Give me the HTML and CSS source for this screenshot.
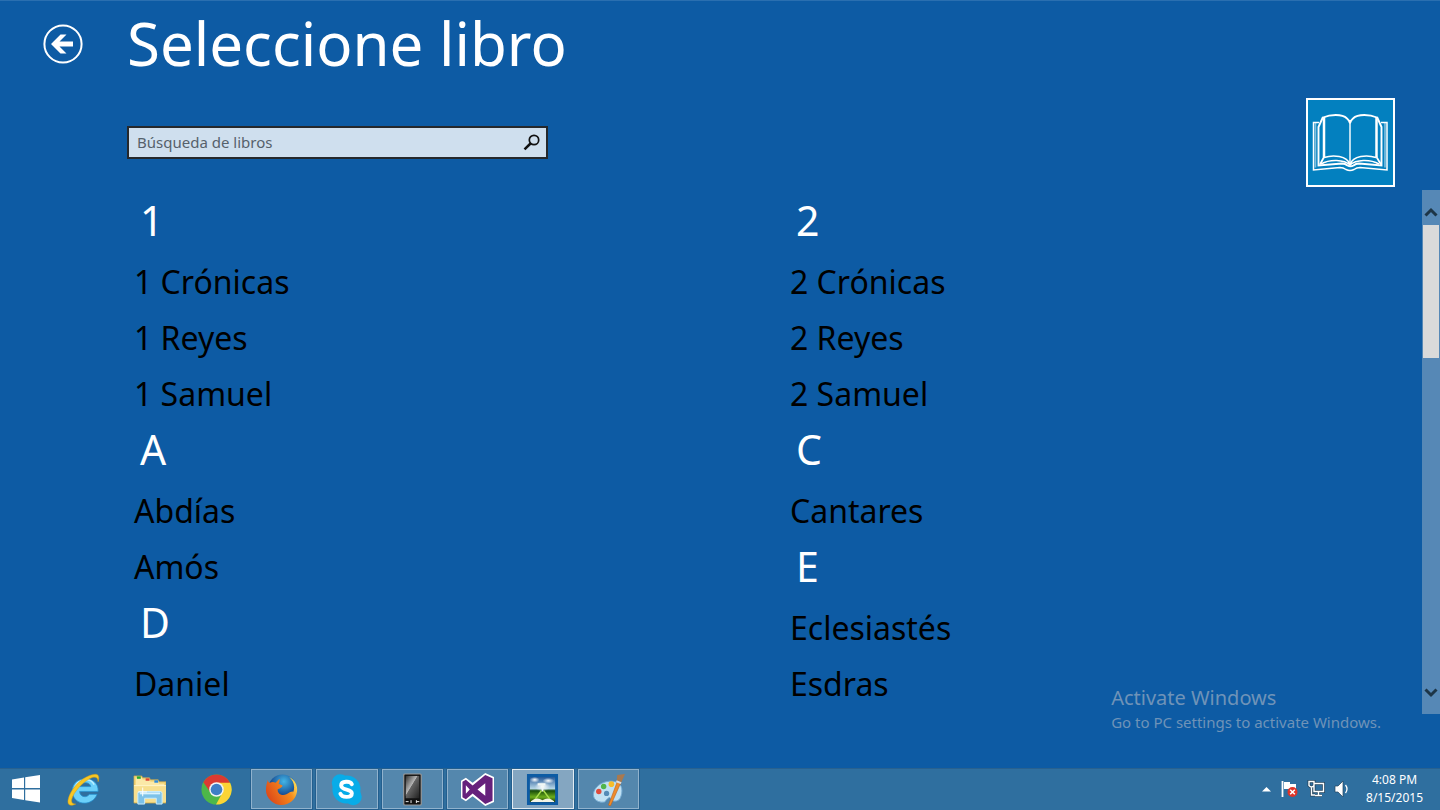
FILE: index.html
```html
<!DOCTYPE html>
<html lang="es">
<head>
<meta charset="utf-8">
<title>Seleccione libro</title>
<link rel="stylesheet" href="styles.css">
</head>
<body>
<main class="app">
  <header class="page-header">
    <button class="back" type="button" aria-label="Atrás">
      <svg viewBox="0 0 40 40"><circle cx="20" cy="20" r="18.600" fill="none" stroke="#fff" stroke-width="2"/><path d="M8 20 17.500 10.500h6L16.500 17.500H30v5H16.500l7 7h-6z" fill="#fff"/></svg>
    </button>
    <h1 class="title">Seleccione libro</h1>
  </header>
  <div class="tools">
    <form class="search" role="search">
      <input class="search-input" type="text" placeholder="Búsqueda de libros" aria-label="Búsqueda de libros">
      <button class="search-button" type="button" aria-label="Buscar">
        <svg viewBox="0 0 18 18" fill="none" stroke="#111"><circle cx="11" cy="7" r="4.700" stroke-width="1.700"/><path d="M7.500 10.500 1.500 16.300" stroke-width="2.500"/></svg>
      </button>
    </form>
    <div class="book-tile">
      <svg viewBox="0 0 85 85" fill="none" stroke="#fff">
        <path d="M11 22.500H5.500V70L32 67.500c3 0 4 .5 6 2q4 2 8 0c2-1.500 3-2 6-2l27 2.500V22.500H73" stroke-width="1.500"/>
        <path d="M7.500 23v44.500M77 23v44.500" stroke-width="1.600" opacity=".5"/>
        <path d="M15 17 10.500 27v38.500L34 63.500c3 0 4 .7 5.500 2q3 1.500 6 0c1.500-1.300 2.500-2 5.500-2l22.500 2V27L69 17" stroke-width="1.900"/>
        <path d="M16 57 12 64.500M68.500 57l4.500 7.500" stroke-width="1.800"/>
        <path d="M16 17v40M68.500 17v40" stroke-width="2.500"/>
        <path d="M15 17.500c7-3 19-4 24 1q3 2.500 3 5q0-2.500 3-5c5-5 17-4 24-1" stroke-width="1.800"/>
        <path d="M16 57.500c9-3 23-2 26 7c3-9 17-10 26-7M13 64c9-5 23-4.500 29 1c6-5.500 20-6 29-1" stroke-width="1.500"/>
        <path d="M42 23v40" stroke-width="1.800" opacity=".8"/>
      </svg>
    </div>
  </div>
  <div class="list-area">
    <div class="columns">
      <div class="column">
        <section><h2 class="letter">1</h2><ul class="books"><li><a href="#">1 Crónicas</a></li><li><a href="#">1 Reyes</a></li><li><a href="#">1 Samuel</a></li></ul></section>
        <section><h2 class="letter">A</h2><ul class="books"><li><a href="#">Abdías</a></li><li><a href="#">Amós</a></li></ul></section>
        <section><h2 class="letter">D</h2><ul class="books"><li><a href="#">Daniel</a></li></ul></section>
      </div>
      <div class="column">
        <section><h2 class="letter">2</h2><ul class="books"><li><a href="#">2 Crónicas</a></li><li><a href="#">2 Reyes</a></li><li><a href="#">2 Samuel</a></li></ul></section>
        <section><h2 class="letter">C</h2><ul class="books"><li><a href="#">Cantares</a></li></ul></section>
        <section><h2 class="letter">E</h2><ul class="books"><li><a href="#">Eclesiastés</a></li><li><a href="#">Esdras</a></li></ul></section>
      </div>
    </div>
    <div class="scrollbar">
      <button class="scroll-button scroll-up" type="button" aria-label="Subir"><svg viewBox="0 0 14 10"><path d="M1.500 8.500 7 3l5.500 5.500" fill="none" stroke="#1d3547" stroke-width="3"/></svg></button>
      <div class="thumb"></div>
      <button class="scroll-button scroll-down" type="button" aria-label="Bajar"><svg viewBox="0 0 14 10"><path d="M1.500 1.500 7 7l5.500-5.500" fill="none" stroke="#1d3547" stroke-width="3"/></svg></button>
    </div>
  </div>
  <aside class="watermark">
    <p class="watermark-title">Activate Windows</p>
    <p class="watermark-text">Go to PC settings to activate Windows.</p>
  </aside>
</main>
<footer class="taskbar">
  <button class="start" type="button" aria-label="Start"><svg width="28" height="28" viewBox="0 0 28 28" fill="#fff"><path d="M0 4.500 12 2.500V13H0zM13.200 2.300 28 0v13H13.200zM0 14.400h12V25L0 23zM13.200 14.400H28V27.500l-14.800-2.200z"/></svg></button>
  <nav class="pinned">
    <button class="task" type="button" aria-label="Internet Explorer">
      <svg viewBox="0 0 34 34"><path d="M32 19H13c.2 6 7.500 7 10 3h8C26 35.500 5.500 33.500 5.500 18.500 5.500 1.500 33.500 2 32 19zM13 14h11.500c-.5-5.300-10.500-5.500-11.500 0z" fill="#6bd0fa" stroke="#2791cf" stroke-width=".8"/><path d="M8 15C11 6 24 4 28 12" fill="none" stroke="#bdefff" stroke-width="1.500"/><path d="M9 32c-6 3-9.500 1-7.500-6C5 14 18 2 29 1.300c4-.2 4.500 3.500 3 7.700 0-4-2-5.500-6-4.300C17 8 6.500 20 4.900 27c-.8 4 1 5 4.100 5z" fill="#f8c724" stroke="#d69b11" stroke-width=".5"/></svg>
    </button>
    <button class="task" type="button" aria-label="File Explorer">
      <svg viewBox="0 0 34 34"><path d="M1 3h8l1 2h7l1 2h8l1 2h7v22H1z" fill="#f3d77c" stroke="#c9a64a" stroke-width=".7"/><path d="M3 5h6l1 2h7l1 2h8l1 2h5v17H3z" fill="#fbe9a8"/><path d="M4 3.500h4V6H4z" fill="#27a92f"/><path d="M13 5.500h4V8h-4z" fill="#dc4738"/><path d="M22 7.500h4V10h-4z" fill="#2d8bdd"/><path d="M1 13h33v17H1z" fill="#f7df8e"/><path d="M1 13h33" stroke="#fff5ca"/><path d="M5 32V21q0-2 2-2h21q2 0 2 2v11h-6v-6H12v6z" fill="#7cc2e9" stroke="#c9edff"/><path d="M7 21h21" stroke="#d8f3ff" stroke-width="2"/><path d="M10 15v9M5.500 19.500h9" stroke="#fff"/></svg>
    </button>
    <button class="task" type="button" aria-label="Google Chrome">
      <svg viewBox="0 0 34 34"><circle cx="17" cy="17" r="15.500" fill="#4db749"/><path d="M3.500 9.500a15.500 15.500 0 0 1 27 0l.5 1.500H17a7 7 0 0 0-6.500 8.500z" fill="#db3a31"/><path d="M17 10h14A15.500 15.500 0 0 1 16.500 32.500L23 20.500A7 7 0 0 0 17 10z" fill="#fbd436"/><circle cx="17" cy="17" r="7.500" fill="#f3f5f5"/><circle cx="17" cy="17" r="6" fill="#3e7fc6"/></svg>
    </button>
  </nav>
  <nav class="running">
    <button class="task window" type="button" aria-label="Firefox">
      <svg viewBox="0 0 34 34"><defs><radialGradient id="globe" cx=".55" cy=".25"><stop offset="0" stop-color="#43b5e6"/><stop offset="1" stop-color="#14478f"/></radialGradient><linearGradient id="fox" x1="0" x2="1" y1=".7" y2=".2"><stop offset="0" stop-color="#db4519"/><stop offset=".65" stop-color="#f58a1c"/><stop offset="1" stop-color="#ffe65b"/></linearGradient></defs><circle cx="18" cy="16" r="14.500" fill="url(#globe)"/><path d="M3 7c0 2 1 3 2 3 2-1 4-1 6 0l4-4c0 2 0 4-1 5l4 2c0 2-3 3-5 4 0 5 5 7 9 5 3-2 4-3 7-3-1 5-7 9-13 7 9 2 14-5 14-11 0-5-2-8-5-11 6 3 9 9 8 15-1 8-8 14-16 14S1 26 1 18c0-5 1-8 2-11z" fill="url(#fox)"/></svg>
    </button>
    <button class="task window" type="button" aria-label="Skype">
      <svg viewBox="0 0 34 34"><circle cx="17" cy="17" r="14.500" fill="#08ace8"/><circle cx="10.500" cy="10" r="8.700" fill="#08ace8"/><circle cx="24" cy="24.500" r="8.700" fill="#08ace8"/><path d="M22.500 11.500C21 8 11.500 8 11.500 12.800c0 5.500 11 3 11 8 0 5-10 5-11.800.7" fill="none" stroke="#fff" stroke-width="4" stroke-linecap="round"/></svg>
    </button>
    <button class="task window" type="button" aria-label="Phone">
      <svg viewBox="0 0 34 34"><defs><linearGradient id="glass" x1="0" y1="0" x2="1" y2="1"><stop offset="0" stop-color="#303030"/><stop offset=".42" stop-color="#b5b5b5"/><stop offset=".45" stop-color="#656565"/><stop offset="1" stop-color="#202020"/></linearGradient></defs><rect x="8" y="1" width="18" height="32" rx="1" fill="#111" stroke="#9a9a9a" stroke-width="1.200"/><path d="M10 3h14v23H10z" fill="url(#glass)"/><path d="M10 29.500h3M15.500 28v3M21 28v3M21 29.500h3" stroke="#eee"/></svg>
    </button>
    <button class="task window" type="button" aria-label="Visual Studio">
      <svg viewBox="0 0 34 34"><path d="M0 8 5 5l7 5L25 0l9 4v26l-9 4-13-10-7 5-5-3z" fill="#fff"/><path d="M1.500 9 5 7l7 6L25 2l7.500 3.500v23L25 32 12 21l-7 6-3.500-2z" fill="#66217c"/><path d="M5 12.500v9L9 17zM25 10.500v13L17 17z" fill="#fff"/></svg>
    </button>
    <button class="task window active" type="button" aria-label="Biblia">
      <svg viewBox="0 0 34 34"><defs><linearGradient id="sky" x2="0" y2="1"><stop offset="0" stop-color="#245797"/><stop offset=".46" stop-color="#b5d5e6"/><stop offset=".55" stop-color="#174b0b"/><stop offset=".8" stop-color="#6cae1c"/><stop offset="1" stop-color="#15300a"/></linearGradient><radialGradient id="glow"><stop offset="0" stop-color="#fff"/><stop offset="1" stop-color="#fff" stop-opacity="0"/></radialGradient></defs><path d="M1 1h32v32H1z" fill="#0d5ba4"/><path d="M4 4h26v26H4z" fill="url(#sky)"/><ellipse cx="9" cy="7" rx="5" ry="3" fill="url(#glow)"/><ellipse cx="23" cy="8" rx="6" ry="3" fill="url(#glow)"/><ellipse cx="17" cy="14" rx="8" ry="5" fill="url(#glow)"/><path d="M12 10.500h8v2.500h-2v6h-2v-6h-4z" fill="#f1f7f5"/><path d="M16 18 8 29M18 18l8 11" stroke="#a7dc4c" stroke-width="1.500"/><path d="M5 29q6-5 12-1 6-4 12 1v1H5z" fill="#f3f3e5"/></svg>
    </button>
    <button class="task window" type="button" aria-label="Paint">
      <svg viewBox="0 0 34 34"><path d="M13 30C3 31-1 24 3 17 7 10 17 7 24 9c8 2 8 11 5 17-2 4-9 4-10 0-1-3-6 4-6 4z" fill="#c0e1f3" stroke="#76aad2"/><circle cx="15" cy="21" r="2.700" fill="#538bb6"/><circle cx="7" cy="19" r="2.800" fill="#e04b3c"/><circle cx="12" cy="14" r="2.800" fill="#50b54b"/><circle cx="20" cy="11.500" r="2.900" fill="#f6bd2b"/><path d="m17 33 9-24 3.500 1.500L19 34z" fill="#ef8c2c" stroke="#b96320" stroke-width=".6"/><path d="m25.500 8 .5-6 8-1-4 9z" fill="#a9794f"/><path d="m25 8.500 5 2" stroke="#ddd" stroke-width="2"/></svg>
    </button>
  </nav>
  <div class="tray">
    <svg width="9" height="6" viewBox="0 0 9 6"><path d="M0 5.500 4.500 1 9 5.500z" fill="#fff"/></svg>
    <svg width="18" height="18" viewBox="0 0 18 18"><path d="M2.500 1v16" stroke="#fff" stroke-width="1.800"/><path d="M4 2h6v2h6v7H9V9H4z" fill="#fff"/><circle cx="12.500" cy="12" r="5" fill="#df3429"/><path d="m10.200 9.700 4.600 4.600m0-4.600-4.600 4.600" stroke="#fff" stroke-width="1.500"/></svg>
    <svg width="18" height="18" viewBox="0 0 18 18" fill="none"><path d="M7 3.500h9.500v8H7zM11.500 12v3M8 15.500h7M2 1.500h5v4q-2.500 3-5 0zM4.500 7v8H8" stroke="#24445d" stroke-width="3"/><path d="M7 3.500h9.500v8H7zM11.500 12v3M8 15.500h7M2 1.500h5v4q-2.500 3-5 0zM4.500 7v8H8" stroke="#fff" stroke-width="1.400"/></svg>
    <svg width="16" height="18" viewBox="0 0 16 18"><path d="M1 6h3l5-5v16l-5-5H1z" fill="#fff" stroke="#24445d" stroke-width=".7"/><path d="M11.500 5q3 4 0 8" fill="none" stroke="#fff" stroke-width="1.300"/></svg>
    <div class="clock"><time>4:08 PM</time><time>8/15/2015</time></div>
  </div>
</footer>
</body>
</html>
```
FILE: styles.css
```css
* { box-sizing: border-box; }
body {
  margin: 0;
  height: 100vh;
  display: flex;
  flex-direction: column;
  overflow: hidden;
  background: #0d5ba4;
  color: #fff;
  font-family: "Noto Sans", "Open Sans", sans-serif;
}
button { padding: 0; border: 0; background: none; font: inherit; }
svg { display: block; }
.app {
  flex: 1;
  min-height: 0;
  position: relative;
  display: flex;
  flex-direction: column;
  padding-bottom: 54px;
  border-top: 1px solid #2a6fb0;
}
.page-header { display: flex; align-items: center; height: 85px; margin-bottom: 8px; padding-left: 43px; gap: 44px; }
.back { width: 40px; height: 40px; }
.title { margin: 0; font-size: 60px; font-weight: 400; line-height: 85px; }
.tools { display: flex; justify-content: space-between; align-items: center; height: 96px; padding: 0 45px 0 127px; }
.search { display: flex; align-items: center; width: 421px; height: 33px; border: 2px solid #25282c; background: #cfdfee; }
.search-input { flex: 1; min-width: 0; padding: 0 8px; border: 0; background: none; outline: 0; font: 15px "Noto Sans", sans-serif; color: #222; }
.search-input::placeholder { color: #56616b; opacity: 1; }
.search-button { width: 29px; height: 29px; display: grid; place-items: center; }
.search-button svg { width: 18px; height: 18px; }
.book-tile { width: 89px; height: 89px; border: 2px solid #fff; background: #0380bf; }
.list-area { flex: 1; min-height: 0; display: flex; }
.columns { flex: 1; min-width: 0; display: flex; margin-right: -18px; padding-left: 128px; overflow: hidden; }
.column { flex: 0 0 50%; padding-left: 6px; }
.letter { margin: 0; padding-left: 6px; height: 61px; font-size: 41px; line-height: 61px; font-weight: 400; }
.books { margin: 0; padding: 0; list-style: none; }
.books a { display: block; height: 56px; padding-top: 5px; line-height: 51px; font-size: 32px; color: #000; text-decoration: none; }
.scrollbar { width: 18px; display: flex; flex-direction: column; background: #5688b6; }
.scroll-button { height: 35px; display: grid; place-items: center; }
.scroll-button svg { width: 14px; height: 10px; }
.scroll-up { padding-top: 8px; }
.scroll-down { margin-top: auto; padding-bottom: 8px; }
.thumb { height: 133px; margin: 0 1px; background: #dadada; }
.watermark { position: absolute; right: 59px; bottom: 34px; color: #6f93b8; }
.watermark p { margin: 0; line-height: 24px; }
.watermark-title { font-size: 20px; }
.watermark-text { font-size: 15px; }
.taskbar { display: flex; height: 42px; padding-bottom: 1px; background: #2f6f9f; border-top: 1px solid #28618f; }
.start { width: 52px; display: grid; place-items: center; }
.pinned { display: grid; grid-template-columns: repeat(3, 1fr); gap: 4px; width: 196px; }
.running { display: grid; grid-template-columns: repeat(6, 1fr); gap: 4px; width: 388px; margin-left: 3px; }
.task { display: grid; place-items: center; }
.task svg { width: 33px; height: 33px; }
.window { border: 1px solid #90b2cd; background: #5487ad; outline: 1px solid #245f8e; }
.active { border-color: #e2ebf2; background: #84a6c1; }
.tray { margin-left: auto; display: flex; align-items: center; gap: 9px; padding-right: 17px; }
.clock { display: flex; flex-direction: column; align-items: center; margin-left: 7px; font-size: 12px; line-height: 18px; }
```
